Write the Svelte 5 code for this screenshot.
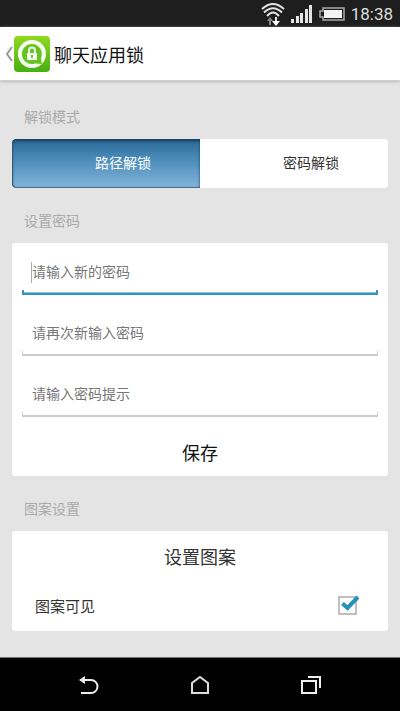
<script lang="ts">
    type Field = { id: string; hint: string; value: string }

    let mode = $state('pattern')
    let active = $state('new')
    let visible = $state(true)
    let fields: Field[] = $state([
        { id: 'new', hint: '请输入新的密码', value: '' },
        { id: 'again', hint: '请再次新输入密码', value: '' },
        { id: 'tip', hint: '请输入密码提示', value: '' }
    ])
</script>

<div class="screen">
    <div class="status">
        <svg width="24" height="26" viewBox="0 0 24 26" fill="none" stroke="#e4e4e4" stroke-width="2">
            <path d="M1 8Q12 -2 23 8" />
            <path d="M3 11.500Q12 3 21 11.500" />
            <path d="M6 15Q12 8 18 15" />
            <path d="M9 24V19" stroke="#888" />
            <path d="M6 20L9 16L12 20Z" fill="#888" stroke="none" />
            <path d="M15 16V21" />
            <path d="M11 20L15 25L19 20Z" fill="#fff" stroke="none" />
        </svg>
        <svg width="22" height="18" viewBox="0 0 22 18" fill="#e4e4e4">
            <rect x="0" y="14" width="3" height="4" />
            <rect x="5" y="11" width="3" height="7" />
            <rect x="9" y="8" width="3" height="10" />
            <rect x="14" y="4" width="3" height="14" />
            <rect x="18" y="0" width="3" height="18" />
        </svg>
        <svg width="26" height="14" viewBox="0 0 26 14" fill="none">
            <path d="M4 1H25V13H4V10H1V4H4Z" stroke="#aaa" stroke-width="1.5" />
            <path d="M5 3H23V11H5Z" fill="#f4f4f4" />
        </svg>
        <span class="clock">18:38</span>
    </div>

    <header>
        <button class="up" aria-label="返回">
            <svg width="8" height="18" viewBox="0 0 8 18" fill="none" stroke="#999" stroke-width="2">
                <path d="M7 2L2 9L7 16" />
            </svg>
        </button>
        <svg width="36" height="36" viewBox="0 0 36 36">
            <defs>
                <linearGradient id="green" x1="0" y1="0" x2="0" y2="1">
                    <stop offset="0" stop-color="#92d820" />
                    <stop offset="1" stop-color="#45b012" />
                </linearGradient>
            </defs>
            <rect width="36" height="36" rx="4" fill="url(#green)" />
            <circle cx="18" cy="18" r="14" fill="#f7fff0" />
            <path d="M18 8a10 10 0 1 0 3 19.500L28 28L27 22A10 10 0 0 0 18 8Z" fill="#66c420" />
            <path d="M15 17V14.500a3 3 0 0 1 6 0V17" fill="none" stroke="#f7fff0" stroke-width="1.800" />
            <rect x="13" y="17" width="10" height="7" rx="1" fill="#f7fff0" />
            <path d="M18 19V22" stroke="#4da524" stroke-width="1.500" />
        </svg>
        <h1>聊天应用锁</h1>
    </header>

    <main>
        <section>
            <h2>解锁模式</h2>
            <div class="modes">
                <button class:on={mode === 'pattern'} aria-pressed={mode === 'pattern'} onclick={() => (mode = 'pattern')}>路径解锁</button>
                <button class:on={mode === 'password'} aria-pressed={mode === 'password'} onclick={() => (mode = 'password')}>密码解锁</button>
            </div>
        </section>

        <section>
            <h2>设置密码</h2>
            <form class="card" onsubmit={(e) => e.preventDefault()}>
                <div class="fields">
                    {#each fields as field (field.id)}
                        <label class="field" class:active={active === field.id} class:empty={!field.value}>
                            <input
                                type="text"
                                aria-label={field.hint}
                                placeholder={field.hint}
                                bind:value={field.value}
                                onfocus={() => (active = field.id)}
                            />
                        </label>
                    {/each}
                </div>
                <button class="action save">保存</button>
            </form>
        </section>

        <section>
            <h2>图案设置</h2>
            <div class="card">
                <button class="action">设置图案</button>
                <label class="option">
                    <span>图案可见</span>
                    <input type="checkbox" bind:checked={visible} />
                    <svg width="24" height="22" viewBox="0 0 24 22" fill="none">
                        <rect x="2" y="3" width="17" height="17" stroke="#aaa" stroke-width="1.500" />
                        {#if visible}
                            <path d="M5.500 9.500L10.500 14L21 3" stroke="#2590b8" stroke-width="4" />
                        {/if}
                    </svg>
                </label>
            </div>
        </section>
    </main>

    <nav>
        <button aria-label="后退">
            <svg width="22" height="20" viewBox="0 0 22 20" fill="none" stroke="#eee" stroke-width="2">
                <path d="M4 5H13a6.500 6.500 0 0 1 0 13H3" />
                <path d="M1 5L7 1V9Z" fill="#eee" stroke="none" />
            </svg>
        </button>
        <button aria-label="主页">
            <svg width="22" height="20" viewBox="0 0 22 20" fill="none" stroke="#ddd" stroke-width="2">
                <path d="M3 18V8L11 2L19 8V18Z" />
            </svg>
        </button>
        <button aria-label="最近">
            <svg width="22" height="20" viewBox="0 0 22 20" fill="none" stroke="#eee" stroke-width="2">
                <path d="M2 6H16V18H2Z" />
                <path d="M8 2H20V13" />
            </svg>
        </button>
    </nav>
</div>

<style>
    :global(body) {
        margin: 0;
    }
    * {
        box-sizing: border-box;
    }
    .screen {
        display: flex;
        flex-direction: column;
        min-height: 100vh;
        background: #e4e4e4;
        font-family: Roboto, "Noto Sans CJK SC", sans-serif;
        color: #333;
    }
    svg {
        display: block;
        flex: none;
    }
    button, input {
        font: inherit;
        color: inherit;
        border: 0;
        margin: 0;
        padding: 0;
        background: none;
    }

    .status {
        display: flex;
        align-items: center;
        justify-content: flex-end;
        gap: 6px;
        height: 27px;
        padding-right: 7px;
        background: #1e1e1e;
    }
    .clock {
        font-size: 17px;
        color: #ddd;
    }

    header {
        display: flex;
        align-items: center;
        height: 54px;
        padding-left: 5px;
        background: #fff;
        border-bottom: 1px solid #ccc;
        box-shadow: 0 1px 3px #bbb;
    }
    .up {
        margin-right: 1px;
    }
    h1 {
        margin: 0 0 0 4px;
        font-size: 18px;
        font-weight: 400;
        color: #111;
    }

    main {
        flex: 1;
        display: flex;
        flex-direction: column;
        gap: 23px;
        padding: 26px 12px;
    }
    h2 {
        margin: 0 12px 12px;
        font-size: 14px;
        line-height: 20px;
        font-weight: 400;
        color: #aaa;
    }

    .modes {
        display: flex;
        height: 49px;
        overflow: hidden;
        background: #fff;
        border-radius: 4px;
    }
    .modes button {
        flex: 1;
        padding: 0 0 4px 34px;
        font-size: 14px;
    }
    .modes .on {
        color: #fff;
        border-radius: 4px 0 0 4px;
        background: linear-gradient(#2a6894, #4a8bb8 40%, #82b5db);
        box-shadow: inset 0 2px 3px #173f5c, inset 1px -1px 1px #446a86;
    }
    .modes .on:last-child {
        border-radius: 0 4px 4px 0;
    }

    .card {
        background: #fff;
        border-radius: 3px;
    }
    .fields {
        display: flex;
        flex-direction: column;
        gap: 15px;
        padding: 6px 10px 0;
    }
    .field {
        --line: #ccc;
        position: relative;
        display: block;
        height: 46px;
        background:
            linear-gradient(var(--line), var(--line)) 0 100% / 1px 5px no-repeat,
            linear-gradient(var(--line), var(--line)) 100% 100% / 1px 5px no-repeat,
            linear-gradient(var(--line), var(--line)) 0 100% / 100% 2px no-repeat;
    }
    .field.active {
        --line: #3494ba;
        background:
            linear-gradient(var(--line), var(--line)) 0 100% / 2px 5px no-repeat,
            linear-gradient(var(--line), var(--line)) 100% 100% / 2px 5px no-repeat,
            linear-gradient(#7cc9e4 1px, var(--line) 1px) 0 100% / 100% 3px no-repeat;
    }
    .field.active.empty::before {
        content: "";
        position: absolute;
        left: 9px;
        top: 13px;
        width: 1px;
        height: 21px;
        background: #aaa;
    }
    .field input {
        width: 100%;
        height: 100%;
        padding: 0 10px;
        font-size: 14px;
        outline: none;
    }
    .field input::placeholder {
        color: #777;
        opacity: 1;
    }
    .action {
        display: block;
        width: 100%;
        height: 50px;
        font-size: 18px;
    }
    .save {
        height: 48px;
        margin-top: 11px;
        color: #111;
    }

    .option {
        position: relative;
        display: flex;
        align-items: center;
        justify-content: space-between;
        height: 50px;
        padding: 0 27px 2px 23px;
        font-size: 15px;
    }
    .option input {
        position: absolute;
        right: 27px;
        width: 24px;
        height: 22px;
        opacity: 0;
    }

    nav {
        display: flex;
        justify-content: space-between;
        align-items: center;
        height: 55px;
        padding: 0 78px;
        background: #000;
        border-top: 1px solid #777;
    }
</style>
